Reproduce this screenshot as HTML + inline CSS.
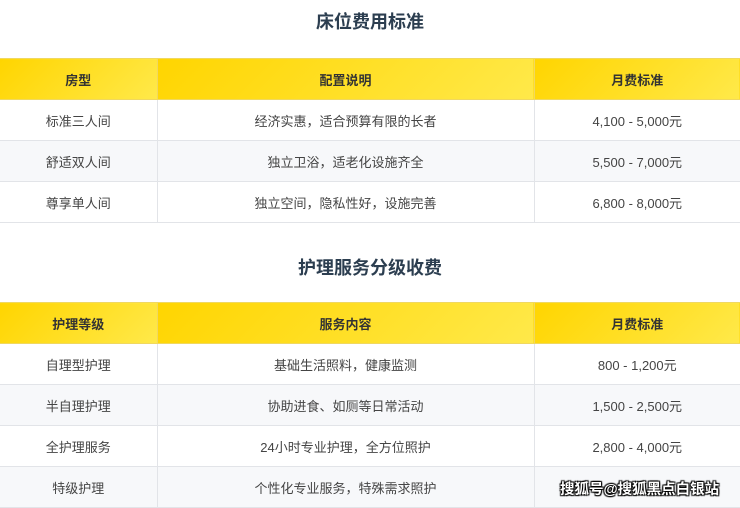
<!DOCTYPE html>
<html><head><meta charset="utf-8"><style>
body{margin:0;width:740px;height:504px;overflow:hidden;background:#fff;font-family:"Liberation Sans","Noto Sans CJK SC",sans-serif;position:relative}
h2{position:absolute;left:0;width:740px;text-align:center;margin:0;font-size:18px;font-weight:bold;color:#2c3e50;line-height:24px}
table{position:absolute;left:0;width:740px;border-collapse:collapse;table-layout:fixed}
td,th{border:1px solid #e2e4e8;text-align:center;font-size:13px;color:#444;height:40px;padding:0;font-weight:normal}
tr td:first-child,tr th:first-child{border-left:none}
tr td:last-child,tr th:last-child{border-right:none}
th{background:linear-gradient(135deg,#ffd500,#ffe94a);font-weight:bold;color:#333;height:40px;border-color:#f0d860}
tr.g td{background:#f7f8fa}
.wm{position:absolute;left:560px;top:478px;font-size:14.5px;font-weight:bold;color:#fff;text-shadow:0 0 1px #000,1px 1px 1px #000,-1px -1px 1px #000,1px -1px 1px #000,-1px 1px 1px #000}
</style></head><body>
<h2 style="top:10px">床位费用标准</h2>
<table style="top:58px">
<colgroup><col style="width:157px"><col style="width:377px"><col></colgroup>
<tr><th>房型</th><th>配置说明</th><th>月费标准</th></tr>
<tr><td>标准三人间</td><td>经济实惠，适合预算有限的长者</td><td>4,100 - 5,000元</td></tr>
<tr class="g"><td>舒适双人间</td><td>独立卫浴，适老化设施齐全</td><td>5,500 - 7,000元</td></tr>
<tr><td>尊享单人间</td><td>独立空间，隐私性好，设施完善</td><td>6,800 - 8,000元</td></tr>
</table>
<h2 style="top:256px">护理服务分级收费</h2>
<table style="top:302px">
<colgroup><col style="width:157px"><col style="width:377px"><col></colgroup>
<tr><th>护理等级</th><th>服务内容</th><th>月费标准</th></tr>
<tr><td>自理型护理</td><td>基础生活照料，健康监测</td><td>800 - 1,200元</td></tr>
<tr class="g"><td>半自理护理</td><td>协助进食、如厕等日常活动</td><td>1,500 - 2,500元</td></tr>
<tr><td>全护理服务</td><td>24小时专业护理，全方位照护</td><td>2,800 - 4,000元</td></tr>
<tr class="g"><td>特级护理</td><td>个性化专业服务，特殊需求照护</td><td></td></tr>
</table>
<div class="wm">搜狐号@搜狐黑点白银站</div>
</body></html>
